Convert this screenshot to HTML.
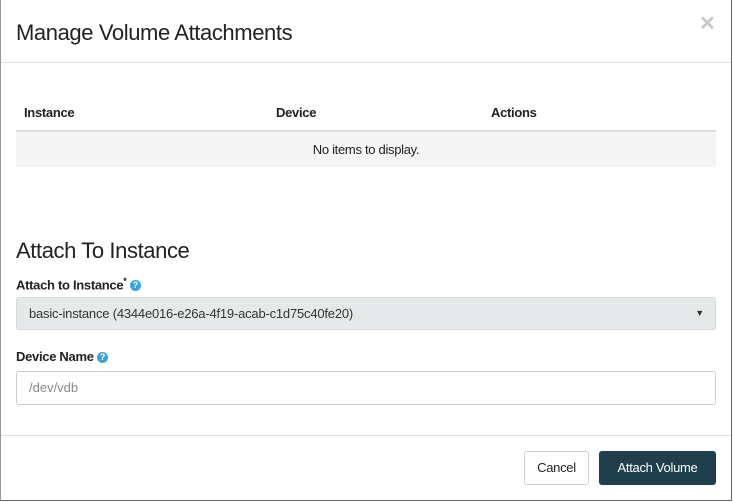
<!DOCTYPE html>
<html><head><style>
*{box-sizing:border-box;margin:0;padding:0}
body{width:733px;height:502px;background:#fff;font-family:"Liberation Sans",sans-serif;color:#222;position:relative;overflow:hidden}
.frame{position:absolute;left:0;top:0;width:732px;height:501px;border-right:1px solid #666;border-bottom:1px solid #666;border-left:1px solid #999}
.abs{position:absolute;white-space:nowrap}
.q{display:inline-block;width:11px;height:11px;border-radius:50%;background:#3aa3dd;color:#fff;font-size:9px;font-weight:bold;text-align:center;line-height:11px;vertical-align:1px}
</style></head><body>
<div class="frame"></div>
<div class="abs" style="left:16px;top:20px;font-size:22px;letter-spacing:-0.4px">Manage Volume Attachments</div>
<div class="abs" style="left:699px;top:11px;font-size:20px;color:#c8c8c8;font-weight:bold">✕</div>
<div class="abs" style="left:1px;top:62px;width:730px;height:1px;background:#e2e2e2"></div>
<div class="abs" style="left:24px;top:105px;font-size:13px;font-weight:bold;letter-spacing:-0.3px">Instance</div>
<div class="abs" style="left:276px;top:105px;font-size:13px;font-weight:bold;letter-spacing:-0.3px">Device</div>
<div class="abs" style="left:491px;top:105px;font-size:13px;font-weight:bold;letter-spacing:-0.3px">Actions</div>
<div class="abs" style="left:16px;top:130px;width:700px;height:2px;background:#ddd"></div>
<div class="abs" style="left:16px;top:132px;width:700px;height:35px;background:#f5f5f5;font-size:13px;text-align:center;line-height:35px;letter-spacing:-0.3px">No items to display.</div>
<div class="abs" style="left:16px;top:238px;font-size:22px;letter-spacing:-0.4px">Attach To Instance</div>
<div class="abs" style="left:16px;top:276px;font-size:13px;font-weight:bold;letter-spacing:-0.3px">Attach to Instance<sup style="font-size:9px">*</sup> <span class="q">?</span></div>
<div class="abs" style="left:16px;top:297px;width:700px;height:33px;background:#e6e9ea;border:1px solid #d6d9da;border-radius:3px;font-size:13px;line-height:31px;padding-left:12px;color:#333;letter-spacing:-0.2px">basic-instance (4344e016-e26a-4f19-acab-c1d75c40fe20)<span style="position:absolute;right:11px;top:0;font-size:9px">▼</span></div>
<div class="abs" style="left:16px;top:349px;font-size:13px;font-weight:bold;letter-spacing:-0.3px">Device Name <span class="q">?</span></div>
<div class="abs" style="left:16px;top:371px;width:700px;height:34px;border:1px solid #ccc;border-radius:3px;font-size:13px;line-height:32px;padding-left:12px;color:#888">/dev/vdb</div>
<div class="abs" style="left:1px;top:435px;width:730px;height:1px;background:#e2e2e2"></div>
<div class="abs" style="left:524px;top:451px;width:65px;height:34px;border:1px solid #ccc;border-radius:3px;font-size:13px;line-height:32px;text-align:center;letter-spacing:-0.3px">Cancel</div>
<div class="abs" style="left:599px;top:451px;width:117px;height:34px;background:#1f3f4d;border-radius:3px;color:#fff;font-size:13px;line-height:34px;text-align:center;letter-spacing:-0.3px">Attach Volume</div>
</body></html>
